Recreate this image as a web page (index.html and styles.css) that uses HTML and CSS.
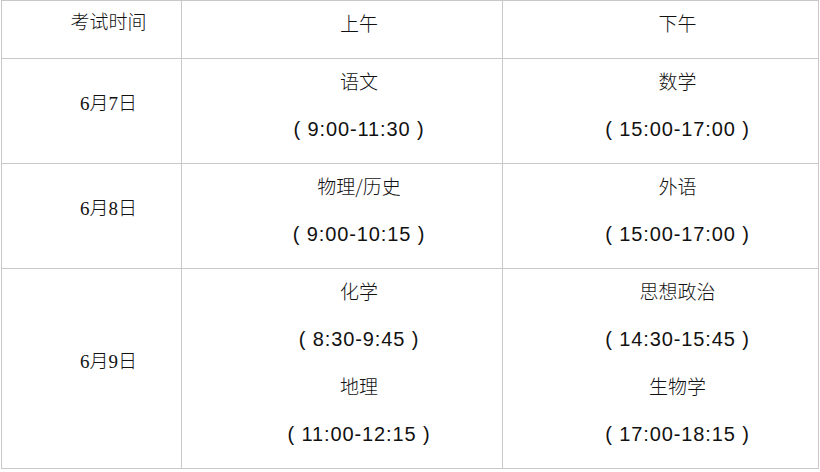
FILE: index.html
```html
<!DOCTYPE html>
<html lang="zh-CN">
<head>
<meta charset="utf-8">
<title>考试时间</title>
<link rel="stylesheet" href="styles.css">
</head>
<body>
<table class="schedule">
  <colgroup>
    <col class="c-date">
    <col class="c-am">
    <col class="c-pm">
  </colgroup>
  <tr class="head">
    <td class="date"><p>考试时间</p></td>
    <td><p>上午</p></td>
    <td><p>下午</p></td>
  </tr>
  <tr>
    <td class="date"><p>6月7日</p></td>
    <td><p class="subj">语文</p><p class="time">( 9:00-11:30 )</p></td>
    <td><p class="subj">数学</p><p class="time">( 15:00-17:00 )</p></td>
  </tr>
  <tr>
    <td class="date"><p>6月8日</p></td>
    <td><p class="subj">物理/历史</p><p class="time">( 9:00-10:15 )</p></td>
    <td><p class="subj">外语</p><p class="time">( 15:00-17:00 )</p></td>
  </tr>
  <tr>
    <td class="date"><p>6月9日</p></td>
    <td><p class="subj">化学</p><p class="time">( 8:30-9:45 )</p><p class="subj">地理</p><p class="time">( 11:00-12:15 )</p></td>
    <td><p class="subj">思想政治</p><p class="time">( 14:30-15:45 )</p><p class="subj">生物学</p><p class="time">( 17:00-18:15 )</p></td>
  </tr>
</table>
</body>
</html>
```
FILE: styles.css
```css
html, body {
  margin: 0;
  background: #ffffff;
}
body {
  padding: 0 0 0 1px;
  font-family: "Noto Sans CJK SC", sans-serif;
  color: #111111;
}
.schedule {
  border-collapse: collapse;
  table-layout: fixed;
  width: 818px;
}
.c-date { width: 180px; }
.c-am { width: 321px; }
.c-pm { width: 316px; }
.schedule td {
  border: 1px solid #c8c8c8;
  padding: 9px 0 0 34px;
  text-align: center;
  vertical-align: top;
}
.schedule td.date {
  vertical-align: middle;
}
.schedule p {
  margin: 0 0 21.5px;
  line-height: 26px;
  font-size: 19px;
  font-weight: 300;
  white-space: nowrap;
}
.schedule .date p {
  font-family: "Liberation Serif", "Noto Sans CJK SC", serif;
}
.schedule .time {
  font-family: "Liberation Sans", "Noto Sans CJK SC", sans-serif;
  font-weight: 400;
  font-size: 20px;
  letter-spacing: 0.9px;
  position: relative;
  top: 1px;
}
```
